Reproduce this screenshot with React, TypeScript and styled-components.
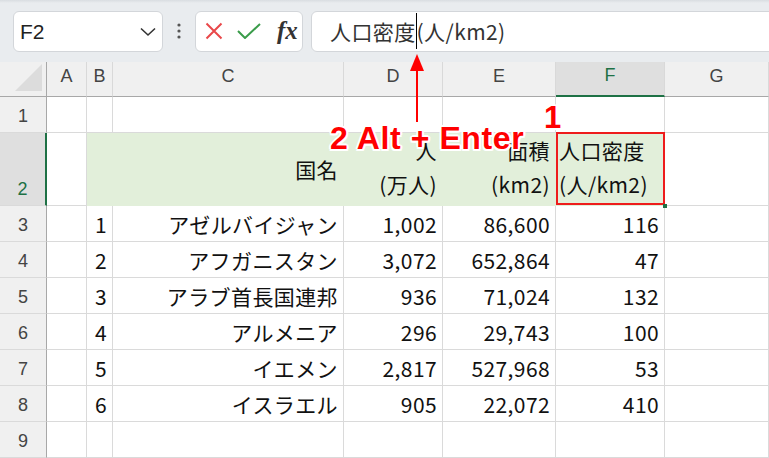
import React from 'react';
import styled, { createGlobalStyle } from 'styled-components';

const GlobalStyle = createGlobalStyle`
  body {
    margin: 0;
    background: #fff;
    font-family: 'Noto Sans CJK JP', sans-serif;
  }
`;

const COLUMNS = ['A', 'B', 'C', 'D', 'E', 'F', 'G'];

const rows = [
  ['1', 'アゼルバイジャン', '1,002', '86,600', '116'],
  ['2', 'アフガニスタン', '3,072', '652,864', '47'],
  ['3', 'アラブ首長国連邦', '936', '71,024', '132'],
  ['4', 'アルメニア', '296', '29,743', '100'],
  ['5', 'イエメン', '2,817', '527,968', '53'],
  ['6', 'イスラエル', '905', '22,072', '410'],
];

const App = () => {
  return (
    <>
      <GlobalStyle />
      <Page>
        <Toolbar>
          <NameBox>
            <span>F2</span>
            <svg width="16" height="10" viewBox="0 0 16 10">
              <polyline points="1,1.5 8,8 15,1.5" fill="none" stroke="#333" strokeWidth="1.6" />
            </svg>
          </NameBox>
          <MoreButton>
            <svg width="4" height="16" viewBox="0 0 4 16">
              <circle cx="2" cy="2" r="1.6" fill="#555" />
              <circle cx="2" cy="8" r="1.6" fill="#555" />
              <circle cx="2" cy="14" r="1.6" fill="#555" />
            </svg>
          </MoreButton>
          <FxBox>
            <svg width="18" height="18" viewBox="0 0 18 18">
              <path d="M1.5 1.5 L16.5 16.5 M16.5 1.5 L1.5 16.5" stroke="#e9484a" strokeWidth="2" fill="none" />
            </svg>
            <svg width="24" height="16" viewBox="0 0 24 16">
              <polyline points="1,8 8,15 23,1" fill="none" stroke="#3a9c4a" strokeWidth="2" />
            </svg>
            <FxLabel>fx</FxLabel>
          </FxBox>
          <FormulaBox>
            人口密度
            <Caret />
            (人/km2)
          </FormulaBox>
        </Toolbar>

        <Sheet>
          <Corner>
            <svg width="30" height="30" viewBox="0 0 30 30">
              <polygon points="29,2 29,29 2,29" fill="#dcdcdc" />
            </svg>
          </Corner>
          {COLUMNS.map(col => (
            <ColHeader key={col} $active={col === 'F'}>
              {col}
            </ColHeader>
          ))}

          <RowHeader>1</RowHeader>
          {COLUMNS.map(col => (
            <Cell key={col} />
          ))}

          <RowHeader $active>2</RowHeader>
          <Cell />
          <Cell $fill />
          <Cell $fill>国名</Cell>
          <Cell $fill $wrap>
            <span>人</span>
            <span>(万人)</span>
          </Cell>
          <Cell $fill $wrap>
            <span>面積</span>
            <span>(km2)</span>
          </Cell>
          <Cell $fill $wrap $align="left" $marked>
            <span>人口密度</span>
            <span>(人/km2)</span>
          </Cell>
          <Cell />

          {rows.map((row, i) => (
            <React.Fragment key={row[0]}>
              <RowHeader>{i + 3}</RowHeader>
              <Cell />
              {row.map((value, j) => (
                <Cell key={j}>{value}</Cell>
              ))}
              <Cell />
            </React.Fragment>
          ))}

          <RowHeader>9</RowHeader>
          {COLUMNS.map(col => (
            <Cell key={col} />
          ))}
        </Sheet>

        <Arrow width="18" height="75" viewBox="0 0 18 75">
          <line x1="9" y1="18" x2="9" y2="72" stroke="#ff0000" strokeWidth="2" />
          <polygon points="9,4 2,21 16,21" fill="#ff0000" />
        </Arrow>
        <StepLabel $size={31} style={{ left: 544, top: 102 }}>1</StepLabel>
        <StepLabel $size={32} style={{ left: 330, top: 122, letterSpacing: '0.6px' }}>
          2 Alt + Enter
        </StepLabel>
      </Page>
    </>
  );
};

export default App;

const Page = styled.div`
  position: relative;
  width: 769px;
  height: 458px;
  overflow: hidden;
`;

const Toolbar = styled.div`
  display: flex;
  align-items: center;
  height: 62px;
  padding-left: 13px;
  box-sizing: border-box;
  background: linear-gradient(#d9dde1 0, #e9ecef 3px);
`;

const NameBox = styled.div`
  display: flex;
  align-items: center;
  justify-content: space-between;
  flex-shrink: 0;
  width: 150px;
  height: 41px;
  box-sizing: border-box;
  padding: 2px 6px 0 6px;
  border: 1px solid #d3d6da;
  border-radius: 6px;
  background: #fff;
  font-family: 'Liberation Sans', sans-serif;
  font-size: 21px;
  color: #222;
`;

const MoreButton = styled.div`
  display: flex;
  justify-content: center;
  width: 32px;
  flex-shrink: 0;
`;

const FxBox = styled.div`
  display: flex;
  align-items: center;
  flex-shrink: 0;
  gap: 14px;
  width: 108px;
  height: 41px;
  box-sizing: border-box;
  padding-left: 9px;
  border: 1px solid #d3d6da;
  border-radius: 6px;
  background: #fff;
`;

const FxLabel = styled.span`
  font-family: 'Liberation Serif', serif;
  font-style: italic;
  font-weight: 700;
  font-size: 25px;
  color: #333;
  margin-left: 2px;
`;

const FormulaBox = styled.div`
  display: flex;
  align-items: center;
  flex-shrink: 0;
  width: 480px;
  height: 41px;
  margin-left: 8px;
  box-sizing: border-box;
  padding-left: 18px;
  border: 1px solid #d3d6da;
  border-radius: 6px;
  background: #fff;
  font-size: 21px;
  letter-spacing: 0.4px;
  color: #333;
`;

const Caret = styled.span`
  display: inline-block;
  width: 1px;
  height: 36px;
  background: #000;
`;

const Sheet = styled.div`
  display: grid;
  grid-template-columns: 47px 40px 26px 231px 99px 113px 109px 104px;
  grid-template-rows: 35px 36px 73px repeat(7, 36px);
`;

const Corner = styled.div`
  display: flex;
  align-items: flex-end;
  justify-content: flex-end;
  padding: 0 3px 4px 0;
  background: #f0f0f0;
  border-right: 1px solid #a8a8a8;
  border-bottom: 1px solid #a8a8a8;
`;

const ColHeader = styled.div<{ $active?: boolean }>`
  display: flex;
  align-items: center;
  justify-content: center;
  padding-bottom: 6px;
  box-sizing: border-box;
  background: ${p => (p.$active ? '#dfdfdf' : '#f0f0f0')};
  border-right: 1px solid #d9d9d9;
  border-bottom: ${p => (p.$active ? '2px solid #1e7145' : '1px solid #a8a8a8')};
  font-family: 'Liberation Sans', sans-serif;
  font-size: 18px;
  color: ${p => (p.$active ? '#1e7145' : '#444')};
`;

const RowHeader = styled.div<{ $active?: boolean }>`
  display: flex;
  align-items: flex-end;
  justify-content: center;
  padding-bottom: 6px;
  box-sizing: border-box;
  line-height: 20px;
  background: ${p => (p.$active ? '#dfdfdf' : '#f0f0f0')};
  border-right: ${p => (p.$active ? '2px solid #1e7145' : '1px solid #a8a8a8')};
  border-bottom: 1px solid #dadada;
  font-family: 'Liberation Sans', sans-serif;
  font-size: 18px;
  color: ${p => (p.$active ? '#1e7145' : '#444')};
`;

const Cell = styled.div<{
  $fill?: boolean;
  $wrap?: boolean;
  $align?: 'left' | 'right';
  $marked?: boolean;
}>`
  position: relative;
  display: flex;
  flex-direction: column;
  justify-content: center;
  align-items: ${p => (p.$align === 'left' ? 'flex-start' : 'flex-end')};
  padding: 0 5px ${p => (p.$wrap ? '5px' : '0')} 3px;
  box-sizing: border-box;
  min-width: 0;
  background: ${p => (p.$fill ? '#e2efda' : '#fff')};
  border-right: 1px solid ${p => (p.$fill ? '#e2efda' : '#dadada')};
  border-bottom: 1px solid ${p => (p.$fill ? '#e2efda' : '#dadada')};
  font-size: 21px;
  line-height: 34px;
  letter-spacing: 0.4px;
  color: #111;
  white-space: nowrap;

  ${p =>
    p.$marked &&
    `
    &::after {
      content: '';
      position: absolute;
      top: -1px;
      left: 0;
      right: -1px;
      bottom: 0;
      border: 2px solid #ee1c1c;
      z-index: 2;
    }
    &::before {
      content: '';
      position: absolute;
      right: -3px;
      bottom: -3px;
      width: 4px;
      height: 4px;
      background: #1e7145;
      z-index: 3;
    }
  `}
`;

const Arrow = styled.svg`
  position: absolute;
  left: 408px;
  top: 50px;
`;

const StepLabel = styled.div<{ $size: number }>`
  position: absolute;
  font-family: 'Liberation Sans', sans-serif;
  font-weight: 700;
  font-size: ${p => p.$size}px;
  line-height: 1;
  color: #ff0000;
  white-space: nowrap;
  z-index: 5;
  text-shadow:
    2px 0 #fff,
    -2px 0 #fff,
    0 2px #fff,
    0 -2px #fff,
    1.5px 1.5px #fff,
    -1.5px -1.5px #fff,
    1.5px -1.5px #fff,
    -1.5px 1.5px #fff;
`;
